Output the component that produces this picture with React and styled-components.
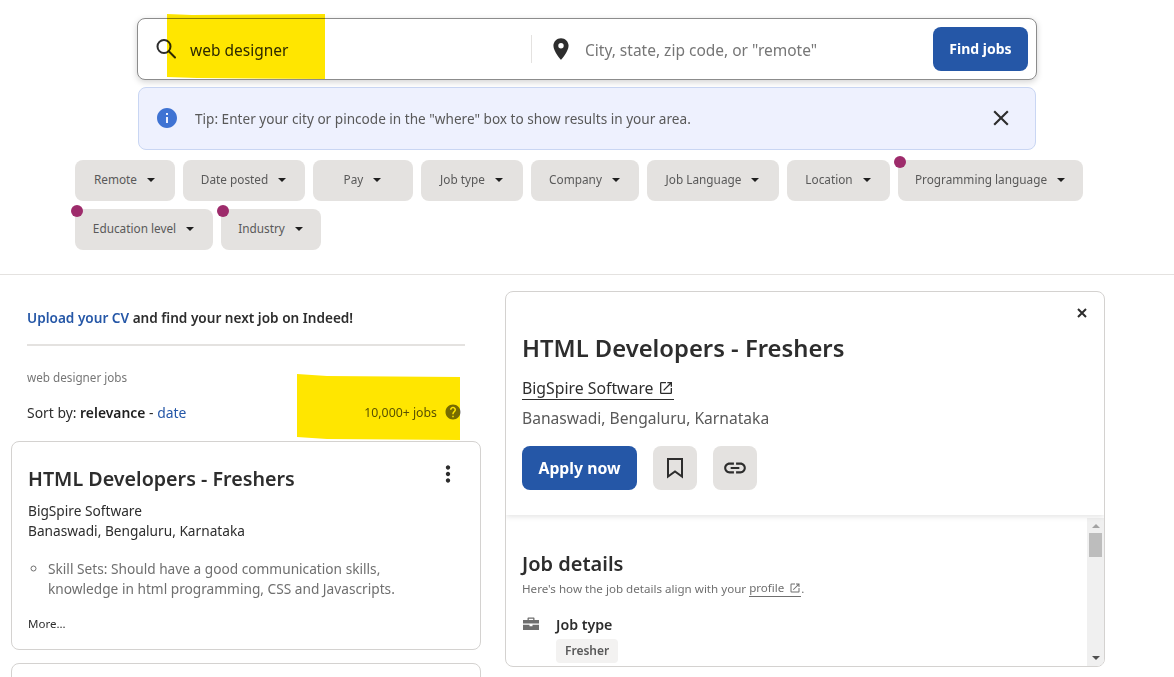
import React from "react";
import styled, { createGlobalStyle } from "styled-components";
import {
  MdLocationOn,
  MdInfo,
  MdClose,
  MdLink,
  MdOpenInNew,
  MdHelp,
  MdMoreVert,
} from "react-icons/md";

const GlobalStyle = createGlobalStyle`
  html, body {
    margin: 0;
    height: 677px;
    overflow: hidden;
    background: #fff;
  }
  body {
    font-family: "Noto Sans", "Liberation Sans", sans-serif;
    color: #2d2d2d;
  }
  * {
    box-sizing: border-box;
  }
`;

const Header = styled.header`
  height: 275px;
  padding-top: 18px;
  border-bottom: 1px solid #e4e2e0;
`;

const SearchBox = styled.form`
  position: relative;
  display: flex;
  align-items: center;
  width: 900px;
  height: 62px;
  margin-left: 137px;
  padding: 0 8px 0 18px;
  background: #fff;
  border: 1px solid #8c8c8c;
  border-radius: 8px;
  box-shadow: 0 2px 6px rgba(0, 0, 0, 0.18);
`;

const WhatField = styled.div`
  display: flex;
  align-items: center;
  width: 376px;
  height: 28px;
  border-right: 1px solid #e4e2e0;
  color: #2d2d2d;
`;

const WhereField = styled.div`
  display: flex;
  align-items: center;
  flex: 1;
  padding-left: 16px;
  color: #2d2d2d;
`;

const SearchInput = styled.input`
  flex: 1;
  min-width: 0;
  margin-left: ${(p) => p.$gap}px;
  padding: 2px 0 0;
  border: 0;
  outline: 0;
  background: transparent;
  font: 15.5px "Noto Sans", sans-serif;
  color: #2d2d2d;
  &::placeholder {
    color: #767676;
    opacity: 1;
  }
`;

const FindButton = styled.button`
  width: 95px;
  height: 44px;
  padding: 0 0 2px;
  border: 0;
  border-radius: 8px;
  background: #2557a7;
  color: #fff;
  font: 700 14px "Noto Sans", sans-serif;
`;

const Marker = styled.svg`
  position: absolute;
  left: ${(p) => p.$left}px;
  top: ${(p) => p.$top}px;
  mix-blend-mode: multiply;
  pointer-events: none;
`;

const Tip = styled.div`
  display: flex;
  align-items: center;
  width: 898px;
  height: 63px;
  margin: 7px 0 0 138px;
  padding: 0 21px 2px 16px;
  background: #eef1fe;
  border: 1px solid #c9d6f3;
  border-radius: 8px;
  font-size: 13.6px;
  color: #595959;
`;

const TipText = styled.span`
  flex: 1;
  margin-left: 16px;
  padding-top: 2px;
`;

const Filters = styled.div`
  display: flex;
  flex-wrap: wrap;
  gap: 8px;
  width: 1020px;
  margin: 10px 0 0 75px;
`;

const Chip = styled.button`
  position: relative;
  display: flex;
  align-items: center;
  justify-content: center;
  width: ${(p) => p.$width}px;
  height: 41px;
  padding: 0 1px 3px 0;
  border: 0;
  border-radius: 8px;
  background: #e4e2e0;
  color: #595959;
  font: 11.8px "Noto Sans", sans-serif;
  white-space: nowrap;
`;

const Caret = styled.span`
  width: 0;
  height: 0;
  margin: 2px 0 0 10px;
  border-left: 4px solid transparent;
  border-right: 4px solid transparent;
  border-top: 4px solid #1f1f1f;
`;

const Dot = styled.span`
  position: absolute;
  left: -4px;
  top: -4px;
  width: 12px;
  height: 12px;
  border-radius: 50%;
  background: #9d2b6b;
`;

const Main = styled.main`
  display: flex;
  align-items: flex-start;
  gap: 24px;
  height: 402px;
  padding-left: 11px;
  overflow: hidden;
`;

const LeftColumn = styled.section`
  width: 470px;
`;

const UploadRow = styled.div`
  margin: 0 16px;
  height: 71px;
  padding-top: 34px;
  border-bottom: 2px solid #e4e2e0;
  font-size: 13.6px;
  font-weight: 600;
  line-height: 18px;
`;

const BlueText = styled.span`
  color: #2557a7;
`;

const SearchLabel = styled.div`
  margin: 23px 16px 0;
  font-size: 11.7px;
  line-height: 16px;
  color: #767676;
`;

const SortRow = styled.div`
  position: relative;
  display: flex;
  align-items: center;
  justify-content: space-between;
  height: 20px;
  margin: 17px 19px 0 16px;
  font-size: 13.9px;
`;

const SortCurrent = styled.b`
  font-weight: 600;
  color: #1f1f1f;
`;

const JobCount = styled.span`
  display: flex;
  align-items: center;
  gap: 7px;
  font-size: 12.3px;
  color: #595959;
`;

const Card = styled.article`
  position: relative;
  height: ${(p) => p.$height}px;
  margin-top: ${(p) => p.$top}px;
  padding: 23px 16px 0;
  border: 1px solid #d4d2d0;
  border-radius: 8px;
`;

const CardTitle = styled.h2`
  margin: 0;
  font-size: 19.7px;
  font-weight: 600;
  line-height: 28px;
`;

const CardMenu = styled.span`
  position: absolute;
  top: 19px;
  right: 19px;
  display: flex;
  font-size: 26px;
  color: #2d2d2d;
`;

const CardMeta = styled.div`
  margin-top: ${(p) => p.$top}px;
  font-size: 13.7px;
  line-height: 20px;
  color: #2d2d2d;
`;

const Snippet = styled.ul`
  max-width: 375px;
  margin: 18px 0 0;
  padding-left: 20px;
  list-style: circle;
  font-size: 13.7px;
  line-height: 20px;
  color: #6f6f6f;
`;

const MoreLink = styled.div`
  margin-top: 17px;
  font-size: 11.5px;
  line-height: 16px;
`;

const DetailPane = styled.section`
  display: flex;
  flex-direction: column;
  width: 600px;
  height: 376px;
  margin-top: 16px;
  border: 1px solid #d4d2d0;
  border-radius: 8px;
  overflow: hidden;
`;

const PaneHeader = styled.div`
  position: relative;
  flex: none;
  height: 223px;
  padding: 39px 16px 0;
  box-shadow: 0 2px 5px rgba(0, 0, 0, 0.1);
`;

const PaneClose = styled.svg`
  position: absolute;
  top: 16px;
  right: 17px;
  width: 10px;
  height: 10px;
  stroke: #2d2d2d;
  stroke-width: 2;
`;

const PaneTitle = styled.h1`
  margin: 0;
  font-size: 23.8px;
  font-weight: 600;
  line-height: 34px;
`;

const CompanyLink = styled.a`
  display: inline-flex;
  align-items: center;
  gap: 4px;
  height: 23px;
  margin-top: 12px;
  border-bottom: 1px solid #2d2d2d;
  font-size: 15.8px;
  color: #2d2d2d;
`;

const PaneLocation = styled.div`
  margin-top: 7px;
  font-size: 15.6px;
  line-height: 22px;
  color: #595959;
`;

const ActionRow = styled.div`
  display: flex;
  gap: 16px;
  margin-top: 17px;
`;

const ApplyButton = styled.button`
  width: 115px;
  height: 44px;
  padding: 0;
  border: 0;
  border-radius: 8px;
  background: #2557a7;
  color: #fff;
  font: 700 15.8px "Noto Sans", sans-serif;
`;

const IconButton = styled.button`
  display: flex;
  align-items: center;
  justify-content: center;
  width: 44px;
  height: 44px;
  padding: 0;
  border: 0;
  border-radius: 8px;
  background: #e4e2e0;
  color: #2d2d2d;
  font-size: 26px;
`;

const PaneBody = styled.div`
  display: flex;
  flex: 1;
  min-height: 0;
  margin-top: 3px;
`;

const PaneContent = styled.div`
  flex: 1;
  padding: 32px 16px 0;
  overflow: hidden;
`;

const SectionTitle = styled.h2`
  margin: 0;
  font-size: 20px;
  font-weight: 600;
  line-height: 28px;
`;

const SectionNote = styled.p`
  display: flex;
  align-items: center;
  margin: 2px 0 0;
  font-size: 11.6px;
  line-height: 16px;
  color: #6f6f6f;
`;

const ProfileLink = styled.span`
  display: inline-flex;
  align-items: center;
  gap: 5px;
  margin-left: 3px;
  border-bottom: 1px solid #6f6f6f;
`;

const DetailRow = styled.div`
  display: flex;
  margin-top: 18px;
`;

const DetailIcon = styled.svg`
  flex: none;
  width: 18px;
  height: 18px;
  margin-right: 16px;
  color: #6f6f6f;
`;

const DetailLabel = styled.div`
  font-size: 14.2px;
  font-weight: 600;
  line-height: 20px;
`;

const Tag = styled.span`
  display: inline-block;
  height: 24px;
  margin-top: 4px;
  padding: 0 9px;
  border-radius: 4px;
  background: #f3f2f1;
  font-size: 12px;
  font-weight: 600;
  line-height: 24px;
  color: #595959;
`;

const Scrollbar = styled.div`
  display: flex;
  flex: none;
  flex-direction: column;
  align-items: center;
  width: 17px;
  padding: 6px 2px;
  background: #f0f0f0;
`;

const ArrowUp = styled.span`
  width: 0;
  height: 0;
  border-left: 4px solid transparent;
  border-right: 4px solid transparent;
  border-bottom: 4px solid #a3a3a3;
`;

const ArrowDown = styled.span`
  width: 0;
  height: 0;
  margin-top: auto;
  border-left: 4px solid transparent;
  border-right: 4px solid transparent;
  border-top: 4px solid #505050;
`;

const Thumb = styled.span`
  width: 13px;
  height: 24px;
  margin-top: 5px;
  background: #bdbdbd;
`;

const filters = [
  { label: "Remote", width: 100 },
  { label: "Date posted", width: 122 },
  { label: "Pay", width: 100 },
  { label: "Job type", width: 102 },
  { label: "Company", width: 108 },
  { label: "Job Language", width: 132 },
  { label: "Location", width: 103 },
  { label: "Programming language", width: 185, dot: true },
  { label: "Education level", width: 138, dot: true },
  { label: "Industry", width: 100, dot: true },
];

const App = () => {
  return (
    <>
      <GlobalStyle />
      <Header>
        <SearchBox>
          <WhatField>
            <svg width="20" height="22" viewBox="0 0 20 22" fill="none" stroke="#2d2d2d" strokeWidth="2">
              <circle cx="8" cy="8.5" r="6.5" />
              <path d="M12.8 13.3 L19 19.5" strokeLinecap="round" />
            </svg>
            <SearchInput $gap={14} defaultValue="web designer" />
          </WhatField>
          <WhereField>
            <MdLocationOn size={26} />
            <SearchInput
              $gap={11}
              placeholder={'City, state, zip code, or "remote"'}
            />
          </WhereField>
          <FindButton type="button">Find jobs</FindButton>
          <Marker $left={29} $top={-5} width="158" height="65" viewBox="0 0 158 65">
            <path d="M0 0 L25 1 L158 0 L158 65 L30 64 L0 63 Z" fill="#ffe600" />
          </Marker>
        </SearchBox>
        <Tip>
          <MdInfo size={24} color="#3f73d3" />
          <TipText>
            Tip: Enter your city or pincode in the "where" box to show results
            in your area.
          </TipText>
          <MdClose size={26} color="#2d2d2d" />
        </Tip>
        <Filters>
          {filters.map((f) => (
            <Chip key={f.label} type="button" $width={f.width}>
              {f.dot && <Dot />}
              {f.label}
              <Caret />
            </Chip>
          ))}
        </Filters>
      </Header>
      <Main>
        <LeftColumn>
          <UploadRow>
            <BlueText>Upload your CV</BlueText> and find your next job on
            Indeed!
          </UploadRow>
          <SearchLabel>web designer jobs</SearchLabel>
          <SortRow>
            <span>
              Sort by: <SortCurrent>relevance</SortCurrent> -{" "}
              <BlueText>date</BlueText>
            </span>
            <JobCount>
              10,000+ jobs
              <MdHelp size={18} color="#767676" />
            </JobCount>
            <Marker $left={270} $top={-28} width="163" height="66" viewBox="0 0 163 66">
              <path d="M0 0 L30 2 L163 3 L163 66 L30 65 L0 63 Z" fill="#ffe600" />
            </Marker>
          </SortRow>
          <Card $height={209} $top={19}>
            <CardTitle>HTML Developers - Freshers</CardTitle>
            <CardMenu>
              <MdMoreVert />
            </CardMenu>
            <CardMeta $top={8}>
              BigSpire Software
              <br />
              Banaswadi, Bengaluru, Karnataka
            </CardMeta>
            <Snippet>
              <li>
                Skill Sets: Should have a good communication skills, knowledge
                in html programming, CSS and Javascripts.
              </li>
            </Snippet>
            <MoreLink>More...</MoreLink>
          </Card>
          <Card $height={120} $top={13} />
        </LeftColumn>
        <DetailPane>
          <PaneHeader>
            <PaneClose viewBox="0 0 10 10">
              <path d="M1 1 L9 9 M9 1 L1 9" />
            </PaneClose>
            <PaneTitle>HTML Developers - Freshers</PaneTitle>
            <CompanyLink>
              BigSpire Software
              <MdOpenInNew size={16} />
            </CompanyLink>
            <PaneLocation>Banaswadi, Bengaluru, Karnataka</PaneLocation>
            <ActionRow>
              <ApplyButton type="button">Apply now</ApplyButton>
              <IconButton type="button">
                <svg width="18" height="22" viewBox="0 0 18 22" fill="none" stroke="#2d2d2d" strokeWidth="2">
                  <path d="M2 2 H16 V19.5 L9 14.5 L2 19.5 Z" />
                </svg>
              </IconButton>
              <IconButton type="button">
                <MdLink />
              </IconButton>
            </ActionRow>
          </PaneHeader>
          <PaneBody>
            <PaneContent>
              <SectionTitle>Job details</SectionTitle>
              <SectionNote>
                Here's how the job details align with your
                <ProfileLink>
                  profile
                  <MdOpenInNew size={12} />
                </ProfileLink>
                .
              </SectionNote>
              <DetailRow>
                <DetailIcon viewBox="0 0 18 18" fill="currentColor">
                  <path d="M6.5 2.5h5c.6 0 1 .4 1 1V5H17v3.6H1V5h4.5V3.5c0-.6.4-1 1-1zm.3 1.3V5h4.4V3.8H6.8z" />
                  <path d="M1 9.8h6.5v1.4h3V9.8H17V15H1V9.8z" />
                </DetailIcon>
                <div>
                  <DetailLabel>Job type</DetailLabel>
                  <Tag>Fresher</Tag>
                </div>
              </DetailRow>
            </PaneContent>
            <Scrollbar>
              <ArrowUp />
              <Thumb />
              <ArrowDown />
            </Scrollbar>
          </PaneBody>
        </DetailPane>
      </Main>
    </>
  );
};

export default App;
